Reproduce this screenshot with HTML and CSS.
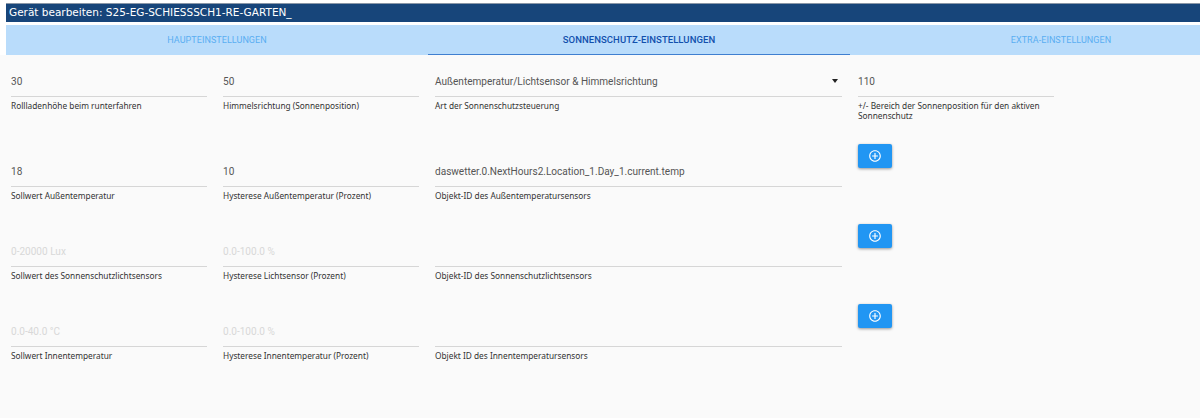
FILE: index.html
```html
<!DOCTYPE html>
<html lang="de">
<head>
<meta charset="utf-8">
<title>Gerät bearbeiten</title>
<link rel="stylesheet" href="styles.css">
</head>
<body>
<div class="dialog">
  <h1 class="title">Gerät bearbeiten: S25-EG-SCHIESSSCH1-RE-GARTEN_</h1>
  <nav class="tabs">
    <div class="tab">HAUPTEINSTELLUNGEN</div>
    <div class="tab active">SONNENSCHUTZ-EINSTELLUNGEN</div>
    <div class="tab">EXTRA-EINSTELLUNGEN</div>
  </nav>
</div>
<main class="form">
  <section class="row row-first">
    <div class="field"><div class="value">30</div><div class="label">Rollladenhöhe beim runterfahren</div></div>
    <div class="field"><div class="value">50</div><div class="label">Himmelsrichtung (Sonnenposition)</div></div>
    <div class="field wide"><div class="value select">Außentemperatur/Lichtsensor &amp; Himmelsrichtung<span class="caret"></span></div><div class="label">Art der Sonnenschutzsteuerung</div></div>
    <div class="field"><div class="value">110</div><div class="label">+/- Bereich der Sonnenposition für den aktiven Sonnenschutz</div></div>
  </section>
  <section class="row">
    <div class="field"><div class="value">18</div><div class="label">Sollwert Außentemperatur</div></div>
    <div class="field"><div class="value">10</div><div class="label">Hysterese Außentemperatur (Prozent)</div></div>
    <div class="field wide"><div class="value">daswetter.0.NextHours2.Location_1.Day_1.current.temp</div><div class="label">Objekt-ID des Außentemperatursensors</div></div>
    <button class="add" type="button"><svg viewBox="0 0 24 24" width="14" height="14"><path fill="#fff" d="M13 7h-2v4H7v2h4v4h2v-4h4v-2h-4V7zm-1-5C6.48 2 2 6.48 2 12s4.48 10 10 10 10-4.48 10-10S17.52 2 12 2zm0 18c-4.41 0-8-3.59-8-8s3.59-8 8-8 8 3.59 8 8-3.59 8-8 8z"/></svg></button>
  </section>
  <section class="row">
    <div class="field"><div class="value empty">0-20000 Lux</div><div class="label">Sollwert des Sonnenschutzlichtsensors</div></div>
    <div class="field"><div class="value empty">0.0-100.0 %</div><div class="label">Hysterese Lichtsensor (Prozent)</div></div>
    <div class="field wide"><div class="value empty">&nbsp;</div><div class="label">Objekt-ID des Sonnenschutzlichtsensors</div></div>
    <button class="add" type="button"><svg viewBox="0 0 24 24" width="14" height="14"><path fill="#fff" d="M13 7h-2v4H7v2h4v4h2v-4h4v-2h-4V7zm-1-5C6.48 2 2 6.48 2 12s4.48 10 10 10 10-4.48 10-10S17.52 2 12 2zm0 18c-4.41 0-8-3.59-8-8s3.59-8 8-8 8 3.59 8 8-3.59 8-8 8z"/></svg></button>
  </section>
  <section class="row">
    <div class="field"><div class="value empty">0.0-40.0 °C</div><div class="label">Sollwert Innentemperatur</div></div>
    <div class="field"><div class="value empty">0.0-100.0 %</div><div class="label">Hysterese Innentemperatur (Prozent)</div></div>
    <div class="field wide"><div class="value empty">&nbsp;</div><div class="label">Objekt ID des Innentemperatursensors</div></div>
    <button class="add" type="button"><svg viewBox="0 0 24 24" width="14" height="14"><path fill="#fff" d="M13 7h-2v4H7v2h4v4h2v-4h4v-2h-4V7zm-1-5C6.48 2 2 6.48 2 12s4.48 10 10 10 10-4.48 10-10S17.52 2 12 2zm0 18c-4.41 0-8-3.59-8-8s3.59-8 8-8 8 3.59 8 8-3.59 8-8 8z"/></svg></button>
  </section>
</main>
</body>
</html>
```
FILE: styles.css
```css
html, body { margin: 0; padding: 0; }
body {
  height: 418px;
  overflow: hidden;
  background: #fafafa;
  font-family: "Roboto", sans-serif;
  color: #333;
}
.dialog {
  padding: 3px 0 0 6px;
  background: #fff;
  overflow: hidden;
}
.title {
  margin: 0;
  height: 19px;
  padding-left: 3px;
  background: #17457a;
  border-top: 1px solid #8a97a8;
  box-sizing: border-box;
  color: #fff;
  font: 400 10.5px/17px "DejaVu Sans", sans-serif;
}
.tabs {
  display: grid;
  grid-template-columns: repeat(3, 422px);
  margin-top: 3px;
  height: 30px;
  background: #b9dcfb;
}
.tab {
  text-align: center;
  font: 400 9px/30px "Roboto", sans-serif;
  letter-spacing: 0.06px;
  color: #5aaef2;
}
.tab.active {
  color: #1150ad;
  font-weight: 500;
  font-size: 9.5px;
  box-shadow: inset 0 -1px 0 #3f7fd0;
}
.form { padding: 0 0 0 11px; }
.row {
  display: grid;
  grid-template-columns: 196px 196px 407px 196px;
  column-gap: 16px;
  height: 80px;
  align-items: start;
}
.row-first {
  height: 90px;
  padding-top: 18px;
}
.value {
  height: 23px;
  line-height: 17px;
  font-size: 10.05px;
  color: #555;
  border-bottom: 1px solid #d6d6d6;
  position: relative;
}
.value.empty { color: #d8d8d8; }
.caret {
  position: absolute;
  right: 4px;
  top: 6px;
  border: 3px solid transparent;
  border-top: 4px solid #222;
  border-bottom: 0;
}
.label {
  margin-top: 4px;
  font: 400 8.3px/10px "Noto Sans", sans-serif;
  color: #333;
}
.add {
  width: 34px;
  height: 24px;
  margin-top: -19px;
  border: 0;
  padding: 0;
  border-radius: 2px;
  background: #2196f3;
  box-shadow: 0 1px 3px rgba(0,0,0,.4);
  display: flex;
  align-items: center;
  justify-content: center;
}
```
